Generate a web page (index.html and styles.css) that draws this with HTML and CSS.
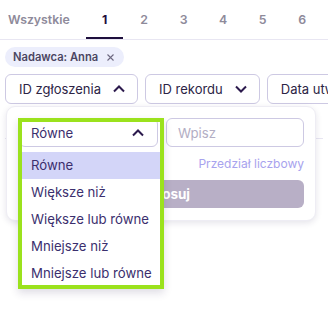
FILE: index.html
```html
<!DOCTYPE html>
<html lang="pl">
<head>
<meta charset="utf-8"/>
<meta content="width=device-width, initial-scale=1.0" name="viewport"/>
<title>Filtry</title>
<link rel="stylesheet" href="styles.css">
</head>
<body>
<div class="tabs">
  <div class="tab tab-all">Wszystkie</div>
  <div class="tab tab-num active">1</div>
  <div class="tab tab-num">2</div>
  <div class="tab tab-num">3</div>
  <div class="tab tab-num">4</div>
  <div class="tab tab-num">5</div>
  <div class="tab tab-num">6</div>
</div>
<div class="content">
  <div class="chips">
    <span class="chip">Nadawca: Anna
      <svg class="chip-x" width="7" height="7" viewBox="0 0 7 7"><path d="M0.5 0.5 6.5 6.5M6.5 0.5 0.5 6.5" fill="none" stroke="currentColor" stroke-width="1.1"/></svg>
    </span>
  </div>
  <div class="filters">
    <div class="filter open">
      <button class="filter-btn">ID zgłoszenia
        <svg class="chev" width="12" height="8" viewBox="0 0 12 8"><path d="M1 6.5 6 1.5 11 6.5" fill="none" stroke="currentColor" stroke-width="2"/></svg>
      </button>
      <div class="panel">
        <div class="panel-row">
          <div class="select-wrap">
            <div class="select">Równe
              <svg class="chev" width="12" height="8" viewBox="0 0 12 8"><path d="M1 6.5 6 1.5 11 6.5" fill="none" stroke="currentColor" stroke-width="2"/></svg>
            </div>
            <ul class="options">
              <li class="selected">Równe</li>
              <li>Większe niż</li>
              <li>Większe lub równe</li>
              <li>Mniejsze niż</li>
              <li>Mniejsze lub równe</li>
            </ul>
            <div class="highlight"></div>
          </div>
          <input class="input" type="text" placeholder="Wpisz">
        </div>
        <div class="range-link">Przedział liczbowy</div>
        <button class="apply">Zastosuj</button>
      </div>
    </div>
    <button class="filter-btn">ID rekordu
      <svg class="chev" width="12" height="8" viewBox="0 0 12 8"><path d="M1 1.5 6 6.5 11 1.5" fill="none" stroke="currentColor" stroke-width="2"/></svg>
    </button>
    <button class="filter-btn">Data utworzenia
      <svg class="chev" width="12" height="8" viewBox="0 0 12 8"><path d="M1 1.5 6 6.5 11 1.5" fill="none" stroke="currentColor" stroke-width="2"/></svg>
    </button>
  </div>
  <div class="divider"></div>
</div>
</body>
</html>
```

FILE: styles.css
```css
html, body {
  height: 100%;
}
body {
  margin: 0;
  font-family: Inter, "Open Sans", sans-serif;
  color: #2c2445;
  background: #fff;
}
.tabs {
  display: flex;
  gap: 2.5px;
  height: 39px;
  border-bottom: 1px solid #e8e6f2;
}
.tab {
  font-size: 12.3px;
  font-weight: 600;
  color: #8e8a9a;
  line-height: 39px;
  text-align: center;
  box-sizing: border-box;
}
.tab-all {
  padding: 0 8px;
  margin-right: 6px;
}
.tab-num {
  width: 37px;
}
.tab.active {
  color: #1e0f3d;
  font-weight: 700;
  border-bottom: 2px solid #1e0f3d;
}
.content {
  padding: 0 5px;
  overflow-x: clip;
}
.chips {
  margin-top: 7px;
  display: flex;
}
.chip {
  display: inline-flex;
  align-items: center;
  height: 20px;
  padding: 0 10px 0 8px;
  border-radius: 10px;
  background: #eceefc;
  color: #4b4662;
  font-size: 11.2px;
  font-weight: 600;
}
.chip-x {
  margin-left: 9px;
  color: #6d6880;
}
.filters {
  display: flex;
  gap: 7px;
  margin-top: 7px;
}
.filter {
  position: relative;
}
.filter-btn {
  display: flex;
  align-items: center;
  gap: 12px;
  height: 30px;
  padding: 0 12px 0 13px;
  border: 1px solid #cdc9e3;
  border-radius: 6px;
  background: #fff;
  font-family: inherit;
  font-size: 13px;
  color: #2c2445;
  white-space: nowrap;
  flex: none;
}
.chev {
  color: #2c1a4d;
  flex: none;
}
.panel {
  position: absolute;
  top: 32px;
  left: 1px;
  width: 310px;
  box-sizing: border-box;
  padding: 11px 11px 12px 12px;
  background: #fff;
  border: 1px solid #eeedf4;
  border-radius: 9px;
  box-shadow: 0 2px 6px rgba(40, 30, 80, 0.12);
  z-index: 2;
}
.panel-row {
  display: grid;
  grid-template-columns: 139px 1fr;
  gap: 8px;
}
.select-wrap {
  position: relative;
}
.select,
.input {
  height: 29px;
  box-sizing: border-box;
  border: 1px solid #cdc9e3;
  border-radius: 6px;
  font-family: inherit;
  font-size: 13.2px;
}
.select {
  display: flex;
  align-items: center;
  justify-content: space-between;
  padding: 0 13px 0 11px;
  color: #3b2f6e;
}
.input {
  width: 100%;
  padding: 0 11px;
  color: #3b2f6e;
  outline: none;
}
.input::placeholder {
  color: #b3aec4;
}
.options {
  position: absolute;
  top: 33px;
  left: 3px;
  width: 138px;
  margin: 0;
  padding: 1px 0 0;
  list-style: none;
  background: #fff;
  z-index: 3;
}
.options li {
  height: 27px;
  line-height: 27px;
  padding-left: 9px;
  font-size: 13.2px;
  color: #3b2f6e;
  white-space: nowrap;
}
.options li.selected {
  background: #d3d5f8;
}
.highlight {
  position: absolute;
  top: 0;
  left: -1px;
  width: 146px;
  height: 171px;
  box-sizing: border-box;
  border: 4px solid #9be21d;
  box-shadow: 0 4px 8px rgba(40, 30, 80, 0.15);
  z-index: 4;
  pointer-events: none;
}
.range-link {
  margin-top: 9px;
  text-align: right;
  font-size: 12px;
  color: #a8a3ee;
}
.apply {
  display: block;
  width: 100%;
  height: 28px;
  margin-top: 9px;
  border: none;
  border-radius: 6px;
  background: #b8afc6;
  color: #fff;
  font-family: inherit;
  font-size: 13.5px;
  font-weight: 700;
}
.divider {
  margin-top: 34px;
  height: 1px;
  background: #e8e6f2;
}
```
